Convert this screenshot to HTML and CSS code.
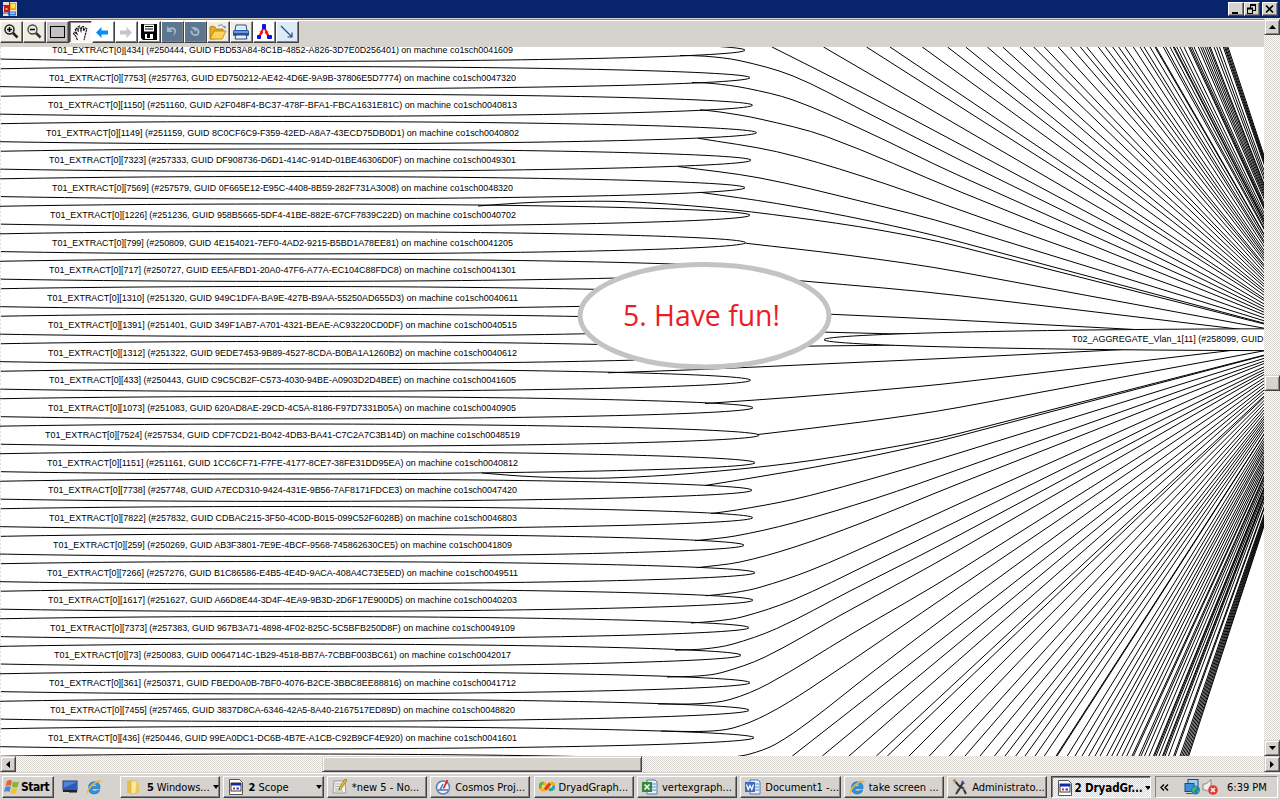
FILE: index.html
```html
<!DOCTYPE html>
<html lang="en">
<head>
<meta charset="utf-8">
<title>DryadGraph</title>
<link rel="stylesheet" href="styles.css">
</head>
<body>
<div class="screen">
  <header class="titlebar">
    <svg class="app-icon" width="14" height="14" viewBox="0 0 14 14"><rect width="14" height="14" fill="#e4e0d4"/><rect x="1" y="4" width="5" height="6" fill="#c81818"/><rect x="2.500" y="6" width="2" height="2" fill="#ff9a80"/><rect x="7" y="1" width="6" height="7" fill="#f4a800"/><rect x="8" y="2" width="4" height="4" fill="#ffdf60"/><rect x="5" y="9.500" width="8" height="4" fill="#3c78d8"/><rect x="6" y="10.500" width="6" height="1.500" fill="#9cc4ff"/><path d="M0 3.500H6.500M6.500 0V14M0 11H6" stroke="#3a4a60" fill="none"/></svg>
    <div class="window-buttons">
      <span class="wbtn"><svg width="12" height="10"><rect x="2" y="8" width="6" height="2"/></svg></span>
      <span class="wbtn gap"><svg width="12" height="10"><path d="M4 1h6M4.500 1v3M9.500 1v5M7 6.500h3M1 4.500h6M1.500 4v6M6.500 4v6M1 9.500h6" stroke="#000" fill="none"/><path d="M4 1h6M1 4.500h6" stroke="#000" stroke-width="2"/></svg></span>
      <span class="wbtn"><svg width="12" height="10"><path d="M2 1.500l7 7M9 1.500l-7 7" stroke="#000" stroke-width="1.700"/></svg></span>
    </div>
  </header>

  <div class="workspace">
    <div class="client">
      <div class="toolbar">
        <span class="tool cream"><svg width="20" height="20"><circle cx="8.500" cy="7.500" r="4.500" fill="#eceae2" stroke="#222" stroke-width="1.500"/><path d="M6 7.500h5M8.500 5v5" stroke="#000" stroke-width="1.500"/><path d="M12 11l4.500 4.500" stroke="#222" stroke-width="2.500"/></svg></span>
        <span class="tool cream"><svg width="20" height="20"><circle cx="8.500" cy="7.500" r="4.500" fill="#eceae2" stroke="#444" stroke-width="1.300"/><path d="M6 7.500h5" stroke="#000" stroke-width="1.500"/><path d="M12 11l4.500 4.500" stroke="#333" stroke-width="2.500"/></svg></span>
        <span class="tool grey"><svg width="20" height="20"><rect x="3.500" y="4.500" width="14" height="11" fill="#c2c2c2" stroke="#000"/></svg></span>
        <span class="tool pressed"><svg width="20" height="20"><path d="M6.500 17L5 13.500 2.500 10.500 3.500 9.300 6 11 4.300 6.500 5.300 5.200 7.500 8.500 7 4 8.500 3 10 8 11 3.500 12.500 3.500 12.500 8 14.300 5 15.800 5.800 14.500 11 13 17" fill="#fff" stroke="#111" stroke-width="1.100" stroke-dasharray="2.500 .5"/></svg></span>
        <span class="tool white"><svg width="20" height="20"><path d="M3 10.500L8.500 5v3.500H15v4H8.500V16z" fill="#0b8cf5"/></svg></span>
        <span class="tool white"><svg width="20" height="20"><path d="M16 10.500L10.500 5v3.500H4v4h6.500V16z" fill="#c6c6c6"/></svg></span>
        <span class="tool white"><svg width="20" height="20"><path d="M2 2h16v16H4l-2-2z"/><rect x="5" y="2.500" width="10" height="7" fill="#fff"/><path d="M6 4.500h8M6 7h8" stroke="#000"/><path d="M6 12h8v5H6z" fill="#fff"/><path d="M8 12h3v4H8z"/></svg></span>
        <span class="tool slate"><svg width="20" height="20"><path d="M5 4v6h6L8.500 8c3-2 5.500 1 2.500 6 6-4 3-11-4-8z" fill="#a5b5c9"/></svg></span>
        <span class="tool slate"><svg width="20" height="20"><path d="M6.500 8.500c-1 6 8 6 7 1-.3-1.500-1-2.500-2.500-2.500" fill="none" stroke="#a5b5c9" stroke-width="2"/><path d="M6 5h5v5z" fill="#a5b5c9"/></svg></span>
        <span class="tool cream"><svg width="20" height="20"><path d="M2 5l2-1 3 1 1 2h7v3l-9 7H2z" fill="#e8ad20" stroke="#a67812" stroke-width=".8"/><path d="M6 9h12l-4 8H2z" fill="#ffd45b" stroke="#b37d10" stroke-width=".8"/><path d="M10 4c3-2 5-1 6 1" fill="none" stroke="#6888b8"/><path d="M14.500 4h3v3z" fill="#6888b8"/></svg></span>
        <span class="tool cream"><svg width="20" height="20"><path d="M5 3h10l1 6H4z" fill="#eef4ff" stroke="#204c90"/><rect x="2" y="8" width="16" height="6" rx="1.500" fill="#2454a4"/><path d="M3 10h14M6 6h8" stroke="#c5d9f5"/><path d="M5 13h10l1 4H4z" fill="#e8f0ff" stroke="#204c90"/></svg></span>
        <span class="tool white"><svg width="20" height="20"><path d="M10 5L5 15M10 5l5 10" stroke="#f01414" stroke-width="2"/><path d="M5.500 9l4 1.500-2 2.500zM14.500 9l-4 1.500 2 2.500z" fill="#f01414"/><rect x="8" y="2" width="4" height="5" rx="1" fill="#0a10e8"/><rect x="3" y="13" width="4" height="4" rx="1" fill="#0a10e8"/><rect x="13" y="13" width="5" height="4" rx="1" fill="#0a10e8"/></svg></span>
        <span class="tool sky"><svg width="20" height="20"><path d="M4 4l11 11M15 10.500V15h-4.500" fill="none" stroke="#294b68" stroke-width="1.200"/></svg></span>
      </div>
      <svg class="graph" id="graph" viewBox="0 47 1264 709" width="1264" height="709">
        <g id="edges" class="edges"></g>
        <g id="vertices" class="edges"></g>
        <g id="labels" class="labels"></g>
        <path d="M.5 47V756" stroke="#e9d8ee" stroke-dasharray="2 2"/>
        <ellipse class="balloon" cx="704.500" cy="315.700" rx="124.500" ry="51.200"/>
        <text class="balloon-text" x="623" y="326" textLength="157" lengthAdjust="spacingAndGlyphs">5. Have fun!</text>
      </svg>
    </div>
    <div class="vscroll">
      <span class="sbtn"><svg width="7" height="4"><path d="M0 4h7L3.500 0z"/></svg></span>
      <span class="vthumb"></span>
      <span class="sbtn end"><svg width="7" height="4"><path d="M0 0h7L3.500 4z"/></svg></span>
    </div>
  </div>

  <div class="hscroll">
    <span class="sbtn"><svg width="4" height="7"><path d="M4 0v7L0 3.500z"/></svg></span>
    <span class="hthumb"></span>
    <span class="sbtn end"><svg width="4" height="7"><path d="M0 0v7l4-3.500z"/></svg></span>
  </div>

  <footer class="taskbar">
    <div class="start"><svg width="16" height="16" viewBox="0 0 16 16"><path d="M3 2q3-2 5 0L7 7Q4.500 5.500 1.500 7z" fill="#ee6030"/><path d="M9 2.500q3 1.500 6 0L13.500 8q-3 1.300-5.500-.3z" fill="#7cb934"/><path d="M1.300 8q3-1.500 5.500 0L5.500 13Q3 11.500 0 13z" fill="#4888e0"/><path d="M7.700 9q3 1.500 5.500 0L12 14q-3 1.500-5.500 0z" fill="#f8c020"/></svg>Start</div>
    <div class="quick">
      <svg width="16" height="16" viewBox="0 0 16 16"><rect x="1" y="2" width="14" height="9" fill="#4f86dc" stroke="#1d3c7c"/><path d="M1 9l14-6v8H1z" fill="#2a5bb8"/><rect x="1" y="11" width="14" height="2" fill="#222"/><path d="M7 13h8v1H7z" fill="#777"/></svg>
      <svg width="16" height="16" viewBox="0 0 16 16"><use href="#ie"/></svg>
    </div>
    <div class="tasks">
      <div class="task"><svg width="16" height="16" viewBox="0 0 16 16"><path d="M2 2l4-1 2 1v13l-6-1z" fill="#e5be50"/><path d="M6 2h6v12l-6 1z" fill="#fbe795" stroke="#d4ab43" stroke-width=".6"/><path d="M12 4h2v10l-4 1" fill="#e9c660"/></svg><span class="label w-win"><b>5</b> Windows...</span><i class="drop"></i></div>
      <div class="task"><svg width="16" height="16" viewBox="0 0 16 16"><use href="#form"/></svg><span class="label w-scope"><b>2</b> Scope</span><i class="drop"></i></div>
      <div class="task"><svg width="16" height="16" viewBox="0 0 16 16"><path d="M2 2h11l1 12H1z" fill="#f4f4ec" stroke="#999"/><path d="M3 5h8M3 7.500h8M3 10h7M3 12h8" stroke="#a4b4a0"/><path d="M15 1L9 10l-2 1 .5-2.500L13 0z" fill="#f4c22b" stroke="#6b5020" stroke-width=".6"/></svg><span class="label">*new 5 - No...</span></div>
      <div class="task"><svg width="16" height="16" viewBox="0 0 16 16"><circle cx="8" cy="8.500" r="6.500" fill="#eef5ff" stroke="#5d80b2" stroke-width="1.500"/><path d="M3 11h10M8 5l-3 6" stroke="#4c78b8" stroke-width="1.500"/><path d="M8.500 9.500L12.500 1" stroke="#e81818" stroke-width="1.700"/></svg><span class="label">Cosmos Proj...</span></div>
      <div class="task"><svg width="16" height="16" viewBox="0 0 16 16"><path d="M4.500 4C1 4 .5 7 1.500 9s3.500 3 5.500 1l4-5c2-2 4-1 4 2s-3 5-5 3L7 6C6 4.500 5.500 4 4.500 4z" fill="none" stroke="#f2b414" stroke-width="3"/><path d="M4.500 4C1 4 .5 7 1.500 9" fill="none" stroke="#5bb52c" stroke-width="3"/><path d="M15 6.500c0 3-2.500 5-5 3.500" fill="none" stroke="#20a5c0" stroke-width="3"/><path d="M6 10.500l5-6" stroke="#e03c18" stroke-width="3"/></svg><span class="label">DryadGraph...</span></div>
      <div class="task"><svg width="16" height="16" viewBox="0 0 16 16"><path d="M5 1h8l2 2v12H5z" fill="#e6f0ff" stroke="#5578b0"/><path d="M10 5h4M10 8h4M10 11h4" stroke="#5b8cbc"/><rect y="3" width="10" height="10" fill="#2f8a3c"/><path d="M2.500 5.500l5 5M7.500 5.500l-5 5" stroke="#fff" stroke-width="1.600"/></svg><span class="label">vertexgraph...</span></div>
      <div class="task"><svg width="16" height="16" viewBox="0 0 16 16"><path d="M5 1h8l2 2v12H5z" fill="#e6f0ff" stroke="#5578b0"/><path d="M10 5h4M10 8h4M10 11h4" stroke="#5b8cbc"/><rect y="3" width="10" height="10" fill="#3c6cc0"/><path d="M1.500 5.500l1.700 5 1.800-4 1.800 4 1.700-5" fill="none" stroke="#fff" stroke-width="1.300"/></svg><span class="label">Document1 -...</span></div>
      <div class="task"><svg width="16" height="16" viewBox="0 0 16 16"><use href="#ie"/></svg><span class="label">take screen ...</span></div>
      <div class="task"><svg width="16" height="16" viewBox="0 0 16 16"><path d="M2 1l5 6 4 2 3 6M11 3l-3 6-4 6" fill="none" stroke="#37343c" stroke-width="2"/><path d="M1 1l3 2" stroke="#e5872e" stroke-width="2"/><path d="M10 2l2 3" stroke="#5445a8" stroke-width="2"/><path d="M4 13l2-4M11 10l3 1" stroke="#a8937b"/></svg><span class="label">Administrato...</span></div>
      <div class="task active"><svg width="16" height="16" viewBox="0 0 16 16"><use href="#form"/></svg><span class="label w-dryad"><b>2 DryadGr...</b></span><i class="drop"></i></div>
    </div>
    <div class="tray">
      <svg width="9" height="7"><path d="M4 .5l-3 3 3 3M8 .5l-3 3 3 3" fill="none" stroke="#000" stroke-width="1.400"/></svg>
      <svg class="net" width="16" height="16" viewBox="0 0 16 16"><rect x="4" y=".5" width="10" height="8" fill="#9fd0ee" stroke="#1d4a7a"/><rect x="1" y="4.500" width="9" height="8" fill="#3a8fd6" stroke="#1d4a7a"/><path d="M2 14.500h7" stroke="#555"/><circle cx="11.500" cy="11" r="4.500" fill="#2476d4"/><path d="M8 10q3-4 5-2l-1 3-2 1 1 3q-3-1-3-5zM13 12l3-1-2 4z" fill="#4cb648"/></svg>
      <svg class="sound" width="16" height="16" viewBox="0 0 16 16"><path d="M1 5h3l5-4.500v14L4 11H1z" fill="#eee" stroke="#888"/><circle cx="11" cy="11" r="4.800" fill="#e03a30"/><path d="M9 9l4 4M13 9l-4 4" stroke="#fff" stroke-width="1.500"/></svg>
      <span class="clock">6:39 PM</span>
    </div>
  </footer>
</div>

<svg class="defs" width="0" height="0"><defs>
  <g id="ie"><path d="M14 9.700H5.700Q6 12.200 8.700 12.200q2 0 2.500-1h2.600q-1.500 3.800-5.200 3.800Q2.500 15 2.500 8.700 2.500 2.800 8.500 2.800T14 9.700zM5.700 7.200h5.200Q10.500 5 8.200 5T5.700 7.200z" fill="#2996e2" stroke="#1767b4" stroke-width=".6"/><path d="M2.500 15.500Q-1.500 13 4.500 6.500 11 .5 14.500 1.200q1.700.5.500 3.300 0-2-2.500-1.500Q8 4.500 4 9.500 1 14 2.500 15.500z" fill="#f4b52d"/></g>
  <g id="form"><path d="M1.500.500h10l3 3v12h-13z" fill="#fff" stroke="#555"/><rect x="3" y="4" width="10" height="8" fill="#fff" stroke="#111" stroke-width=".8"/><rect x="3" y="4" width="10" height="2.500" fill="#1226b0"/><rect x="5" y="8.500" width="2" height="2" fill="#e02818"/><rect x="8.500" y="8.500" width="2.500" height="2" fill="#2846d0"/></g>
</defs></svg>
<script src="graph.js"></script>
</body>
</html>
```
FILE: styles.css
```css
* { box-sizing: border-box; }
body { margin: 0; overflow: hidden; background: #d6d3ce; }
svg { display: block; flex: none; }
.defs { position: absolute; }
.screen { width: 1280px; height: 800px; display: flex; flex-direction: column; font: 11px "DejaVu Sans Condensed", "DejaVu Sans", sans-serif; color: #000; }

.titlebar { height: 18px; flex: none; background: #08246b; display: flex; justify-content: space-between; align-items: flex-start; padding: 2px 2px 0 3px; }
.window-buttons { display: flex; }
.wbtn { width: 16px; height: 14px; background: #d6d3ce; border: 1px solid; border-color: #fff #424142 #424142 #fff; box-shadow: inset -1px -1px #848284; padding: 1px; overflow: hidden; }
.gap { margin-right: 2px; }

.workspace { flex: none; height: 738px; display: flex; }
.client { width: 1264px; display: flex; flex-direction: column; }
.toolbar { height: 29px; flex: none; background: #d6d3ce; border-top: 1px solid #d6d3ce; box-shadow: inset 0 1px #848284, inset 0 2px #fff; padding: 2px 0 0; display: flex; align-items: flex-start; }
.tool { width: 23px; height: 22px; border: 1px solid; border-color: #fff #424142 #424142 #fff; box-shadow: inset -1px -1px #848284; display: flex; overflow: hidden; }
.cream { background: #efece1; }
.grey { background: #c6c5c3; }
.white { background: #fff; }
.slate { background: #5d7690; }
.sky { background: #dceafa; }
.pressed { background: #f8f7f5; border-color: #424142 #fff #fff #424142; box-shadow: inset 1px 1px #848284; padding: 1px 0 0 1px; }

.graph { background: #fff; }
.edges { fill: none; stroke: #000; stroke-width: 1; }
.target { fill: #fff; }
.labels { font: 9.300px "Liberation Sans", Arial, sans-serif; fill: #000; }
.balloon { fill: #fff; stroke: #c3c3c3; stroke-width: 5; }
.balloon-text { font: 28.500px "Open Sans", "Noto Sans", sans-serif; fill: #ed1c24; }

.vscroll, .hscroll { background: repeating-conic-gradient(#fff 0 25%, #d6d3ce 0 50%) 0 0 / 2px 2px; display: flex; }
.vscroll { width: 16px; flex-direction: column; padding-top: 1px; }
.hscroll { height: 16px; flex: none; }
.sbtn, .vthumb, .hthumb { flex: none; width: 16px; height: 16px; background: #d6d3ce; border: 1px solid; border-color: #d6d3ce #424142 #424142 #d6d3ce; box-shadow: inset 1px 1px #fff, inset -1px -1px #848284; display: flex; align-items: center; justify-content: center; }
.vthumb { margin-top: 340px; }
.hthumb { width: 320px; margin-left: 306px; }
.vscroll .end { margin-top: auto; }
.hscroll .end { margin-left: auto; }

.taskbar { flex: none; height: 28px; background: #d6d3ce; box-shadow: inset 0 1px #d6d3ce, inset 0 2px #fff; padding: 4px 2px 2px; display: flex; }
.start, .task { height: 22px; background: #d6d3ce; border: 1px solid; border-color: #fff #424142 #424142 #fff; box-shadow: inset -1px -1px #848284; display: flex; align-items: center; white-space: nowrap; overflow: hidden; }
.start { width: 52px; font-weight: bold; font-size: 12px; letter-spacing: -.5px; padding-left: 1px; gap: 1px; }
.quick { width: 66px; padding-left: 8px; display: flex; align-items: center; gap: 8px; }
.tasks { display: grid; grid-template-columns: repeat(10, 100.300px); gap: 3.100px; width: 1032px; }
.task { padding: 0 4px; gap: 4px; }
.label { flex: 1; }
.w-win { padding-left: 2px; letter-spacing: -.1px; }
.drop { border: 3.500px solid transparent; border-top: 4px solid #000; border-bottom: 0; margin-right: -3px; }
.active { border-color: #424142 #fff #fff #424142; box-shadow: inset 1px 1px #848284; background: repeating-conic-gradient(#fff 0 25%, #d6d3ce 0 50%) 0 0 / 2px 2px; padding: 1px 4px 0 5px; gap: 2px; }
.w-dryad { font-size: 11.500px; letter-spacing: -.1px; }
.tray { margin-left: 3px; width: 123px; height: 22px; border: 1px solid; border-color: #848284 #fff #fff #848284; display: flex; align-items: center; padding-left: 4px; }
.net { margin-left: 15px; }
.sound { margin-left: 2px; }
.clock { margin-left: 9px; white-space: nowrap; }
```
FILE: graph.js
```js
const NS = 'http://www.w3.org/2000/svg';
const TARGET = [1325, 339.5];

function add(parent, tag, attrs, text) {
  const el = document.createElementNS(NS, tag);
  for (const key in attrs) el.setAttribute(key, attrs[key]);
  if (text) el.textContent = text;
  document.getElementById(parent).appendChild(el);
}

// right tip of the ellipse, label start, label end, label text
const vertices = [
  [745, 52, 513, '[434] (#250444, GUID FBD53A84-8C1B-4852-A826-3D7E0D256401) on machine co1sch0041609'],
  [750, 49, 516, '[7753] (#257763, GUID ED750212-AE42-4D6E-9A9B-37806E5D7774) on machine co1sch0047320'],
  [752.5, 48, 517, '[1150] (#251160, GUID A2F048F4-BC37-478F-BFA1-FBCA1631E81C) on machine co1sch0040813'],
  [756.5, 46, 519, '[1149] (#251159, GUID 8C0CF6C9-F359-42ED-A8A7-43ECD75DB0D1) on machine co1sch0040802'],
  [751, 49, 516, '[7323] (#257333, GUID DF908736-D6D1-414C-914D-01BE46306D0F) on machine co1sch0049301'],
  [745, 52, 513, '[7569] (#257579, GUID 0F665E12-E95C-4408-8B59-282F731A3008) on machine co1sch0048320'],
  [750, 50, 516, '[1226] (#251236, GUID 958B5665-5DF4-41BE-882E-67CF7839C22D) on machine co1sch0040702'],
  [745.5, 52, 513, '[799] (#250809, GUID 4E154021-7EF0-4AD2-9215-B5BD1A78EE81) on machine co1sch0041205'],
  [750, 49, 516, '[717] (#250727, GUID EE5AFBD1-20A0-47F6-A77A-EC104C88FDC8) on machine co1sch0041301'],
  [754, 47, 518, '[1310] (#251320, GUID 949C1DFA-BA9E-427B-B9AA-55250AD655D3) on machine co1sch0040611'],
  [754, 48, 517, '[1391] (#251401, GUID 349F1AB7-A701-4321-BEAE-AC93220CD0DF) on machine co1sch0040515'],
  [752, 48, 517, '[1312] (#251322, GUID 9EDE7453-9B89-4527-8CDA-B0BA1A1260B2) on machine co1sch0040612'],
  [750.5, 49, 516, '[433] (#250443, GUID C9C5CB2F-C573-4030-94BE-A0903D2D4BEE) on machine co1sch0041605'],
  [753, 48, 516, '[1073] (#251083, GUID 620AD8AE-29CD-4C5A-8186-F97D7331B05A) on machine co1sch0040905'],
  [759, 45, 520, '[7524] (#257534, GUID CDF7CD21-B042-4DB3-BA41-C7C2A7C3B14D) on machine co1sch0048519'],
  [755, 47, 518, '[1151] (#251161, GUID 1CC6CF71-F7FE-4177-8CE7-38FE31DD95EA) on machine co1sch0040812'],
  [752, 48, 517, '[7738] (#257748, GUID A7ECD310-9424-431E-9B56-7AF8171FDCE3) on machine co1sch0047420'],
  [752.7, 49, 517, '[7822] (#257832, GUID CDBAC215-3F50-4C0D-B015-099C52F6028B) on machine co1sch0046803'],
  [744, 53, 512, '[259] (#250269, GUID AB3F3801-7E9E-4BCF-9568-745862630CE5) on machine co1sch0041809'],
  [755, 47, 518, '[7266] (#257276, GUID B1C86586-E4B5-4E4D-9ACA-408A4C73E5ED) on machine co1sch0049511'],
  [753, 48, 517, '[1617] (#251627, GUID A66D8E44-3D4F-4EA9-9B3D-2D6F17E900D5) on machine co1sch0040203'],
  [749, 50, 515, '[7373] (#257383, GUID 967B3A71-4898-4F02-825C-5C5BFB250D8F) on machine co1sch0049109'],
  [741, 54, 511, '[73] (#250083, GUID 0064714C-1B29-4518-BB7A-7CBBF003BC61) on machine co1sch0042017'],
  [750, 49, 516, '[361] (#250371, GUID FBED0A0B-7BF0-4076-B2CE-3BBC8EE88816) on machine co1sch0041712'],
  [749, 50, 515, '[7455] (#257465, GUID 3837D8CA-6346-42A5-8A40-2167517ED89D) on machine co1sch0048820'],
  [754, 48, 517, '[436] (#250446, GUID 99EA0DC1-DC6B-4B7E-A1CB-C92B9CF4E920) on machine co1sch0041601'],
  [751]
];

vertices.forEach(([tip, start, end, label], i) => {
  const cy = 50.2 + 27.5 * i;
  add('vertices', 'ellipse', { cx: 282.5, cy, rx: tip - 282.5, ry: 11.2 });
  if (label) add('labels', 'text', { x: start, y: cy + 3, textLength: end - start, lengthAdjust: 'spacingAndGlyphs' }, 'T01_EXTRACT[0]' + label);
});

// edges that bend on leaving their vertex, as points along the curve
const curves = [
  [[680, 55.5], [705, 56.2], [740, 60.7], [793, 76], [860, 109], [960, 160]],
  [[692, 82.5], [712, 83.4], [746.7, 88.3], [793, 100], [860, 128.5], [960, 176]],
  [[700, 109.8], [720, 112], [760, 119], [826.7, 136.7], [960, 191.7]],
  [[698, 138.2], [776.7, 151.7], [860, 175.5], [960, 210]],
  [[678, 166.5], [760, 178], [860, 201], [960, 227.3]],
  [[700, 192.3], [776.7, 203.5], [870, 221], [960, 242]],
  [[478, 206], [520, 203], [560, 201.6], [626.7, 201.7], [710, 207.5], [793, 217.2], [880, 230.2], [960, 246.7]],
  [[745.5, 243.2], [850, 255.5], [960, 272]],
  [[745, 276.5], [803, 281], [960, 295.8]],
  [[745, 310], [832, 314.3], [960, 320.3]],
  [[772, 47], [860, 91.5], [960, 144.3]],
  [[608, 372.8], [700, 369.5], [832, 363.5], [960, 357.7]],
  [[705, 403.5], [793, 397.3], [880, 390], [960, 382.2]],
  [[758, 434.5], [860, 422.2], [960, 407.2]],
  [[482, 473], [520, 476], [560, 477.7], [610, 478], [693, 473.3], [793, 463], [880, 449.2], [960, 433.2]],
  [[705, 485.5], [793, 471], [880, 454.3], [960, 435.7]],
  [[711, 513.5], [736.7, 510], [793, 499.5], [860, 482], [960, 452.7]],
  [[695, 540.7], [735, 536], [793, 523], [875, 498.5], [960, 469]],
  [[697, 567.7], [740, 562], [793, 547.5], [860, 523.5], [960, 483.2]],
  [[706, 595.8], [735, 592.5], [760, 587.3], [810, 570.5], [880, 540], [960, 503.3]],
  [[691, 623], [716, 621], [743, 616.7], [793, 600], [870, 563.5], [960, 519.7]],
  [[675, 650.2], [705, 648.8], [732, 644.3], [776.7, 628.5], [850, 591], [960, 534.7]],
  [[667, 677], [698, 676], [722, 672.5], [765, 657], [840, 615.5], [960, 549.3]],
  [[658, 704], [700, 703.6], [730, 699.5], [768, 684], [850, 635], [960, 570]],
  [[661, 731], [705, 731.3], [733, 728], [766.7, 714.5], [810, 688.5], [960, 586.7]],
  [[730, 757.5], [750, 754], [775, 744.5], [810, 721], [870, 674], [960, 606]]
];

// Catmull-Rom spline through the points, written as cubic segments
function spline(points) {
  let d = 'M' + points[0];
  for (let i = 0; i < points.length - 1; i++) {
    const a = points[i - 1] || points[i], b = points[i], c = points[i + 1];
    // the last point takes its tangent from the straight run to the target
    const e = points[i + 2] || TARGET, f = points[i + 2] ? b : c;
    const len = Math.hypot(c[0] - b[0], c[1] - b[1]);
    const m1 = Math.hypot(c[0] - a[0], c[1] - a[1]), m2 = Math.hypot(e[0] - f[0], e[1] - f[1]);
    d += 'C' + [b[0] + (c[0] - a[0]) / m1 * len / 3, b[1] + (c[1] - a[1]) / m1 * len / 3,
      c[0] - (e[0] - f[0]) / m2 * len / 3, c[1] - (e[1] - f[1]) / m2 * len / 3, c[0], c[1]].join(' ');
  }
  return d + 'L' + TARGET;
}
curves.forEach(points => add('edges', 'path', { d: spline(points) }));

// edges that are straight inside the viewport: where they enter it
const above = [823.5, 866.5, 890, 922.3, 947.5, 965.7, 987.3, 1002.7, 1019.7, 1033.7, 1044.3, 1058.3, 1070.7, 1080.3, 1086.7,
  1098.3, 1105.3, 1112.7, 1118.7, 1125, 1133.3, 1140, 1144, 1150, 1155, 1156, 1163.3, 1165.7, 1170, 1173.3, 1174.3, 1176.7,
  1180, 1184, 1188.7, 1190, 1191.7, 1194, 1198.3, 1200.7, 1202.7, 1205, 1207, 1209, 1210.3, 1214, 1216.7, 1219.5, 1223.3,
  1224.6, 1225.6, 1226.8, 1228];
const below = [792.3, 822.3, 849, 876.3, 887.3, 909, 929.3, 949.3, 965, 980, 994.5, 1005, 1015.7, 1025, 1035, 1044.3, 1056,
  1057, 1067.3, 1075, 1082, 1088.7, 1095, 1100, 1106.7, 1111.7, 1116.7, 1122, 1126.7, 1132, 1133.5, 1139, 1141, 1144.5,
  1149, 1153.5, 1154.5, 1156, 1159, 1162.5, 1163.5, 1165, 1168.5, 1173.7, 1175, 1180, 1181.5, 1183, 1184.5, 1186, 1187.5, 1188.7];
above.forEach(x => add('edges', 'path', { d: `M${x} 47L${TARGET}` }));
below.forEach(x => add('edges', 'path', { d: `M${x} 756L${TARGET}` }));

add('edges', 'path', { d: 'M800 331.5L890 333.8L920 333.5M800 346.2L890 345.2L920 345.6' });
add('vertices', 'ellipse', { class: 'target', cx: 1327, cy: 339.7, rx: 503, ry: 11 });
add('labels', 'text', { x: 1072, y: 342.3, textLength: 191.5, lengthAdjust: 'spacingAndGlyphs' }, 'T02_AGGREGATE_Vlan_1[11] (#258099, GUID');
```
